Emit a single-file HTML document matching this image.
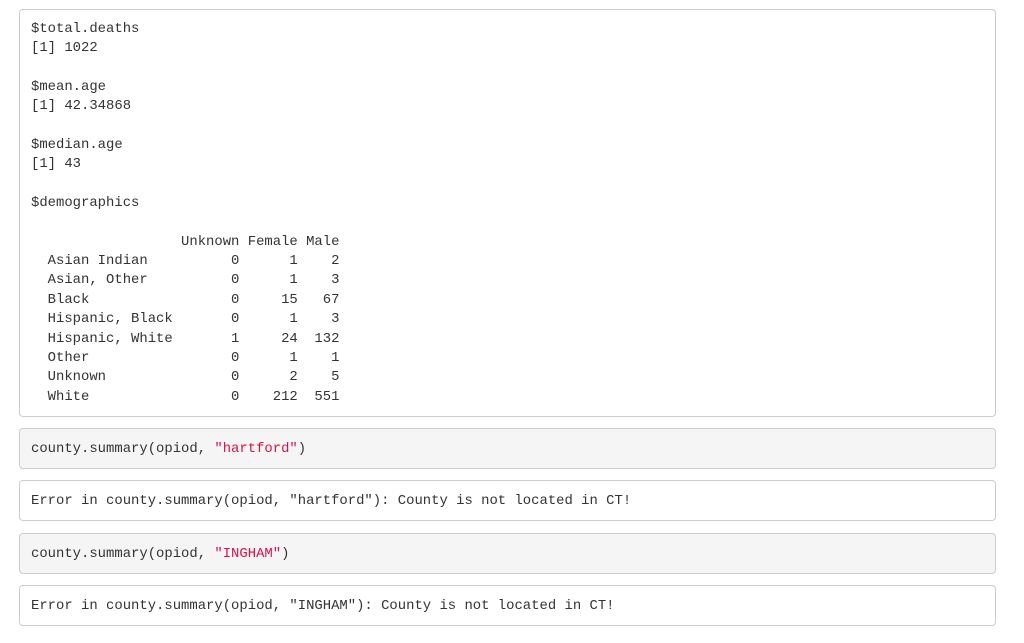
<!DOCTYPE html>
<html><head><style>
body{margin:0;background:#fff;width:1024px;height:643px;overflow:hidden}
pre{position:absolute;left:19px;width:954px;margin:0;padding:10px 10px 9px 11px;border:1px solid #ccc;border-radius:4px;font-family:"Liberation Mono",monospace;font-size:13.9px;line-height:19.35px;color:#333;background:#fff;box-sizing:content-box}
.g{background:#f5f5f5}
.s{color:#dd1144}
</style></head><body>
<pre style="top:9px">$total.deaths
[1] 1022

$mean.age
[1] 42.34868

$median.age
[1] 43

$demographics

                  Unknown Female Male
  Asian Indian          0      1    2
  Asian, Other          0      1    3
  Black                 0     15   67
  Hispanic, Black       0      1    3
  Hispanic, White       1     24  132
  Other                 0      1    1
  Unknown               0      2    5
  White                 0    212  551</pre>
<pre class="g" style="top:428px;padding-top:11px;padding-bottom:9px;line-height:19px">county.summary(opiod, <span class="s">"hartford"</span>)</pre>
<pre style="top:480px;padding-top:11px;padding-bottom:9px;line-height:19px">Error in county.summary(opiod, "hartford"): County is not located in CT!</pre>
<pre class="g" style="top:533px;padding-top:11px;padding-bottom:9px;line-height:19px">county.summary(opiod, <span class="s">"INGHAM"</span>)</pre>
<pre style="top:585px;padding-top:11px;padding-bottom:9px;line-height:19px">Error in county.summary(opiod, "INGHAM"): County is not located in CT!</pre>
</body></html>
